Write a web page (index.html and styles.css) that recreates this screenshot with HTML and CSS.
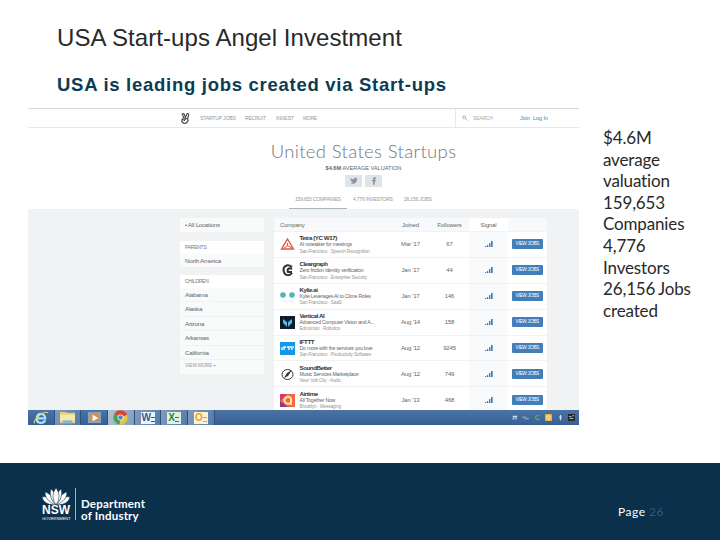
FILE: index.html
```html
<!DOCTYPE html>
<html lang="en">
<head>
  <meta charset="UTF-8">
  <meta name="viewport" content="width=device-width, initial-scale=1.0">
  <title>USA Start-ups Angel Investment</title>
  <link rel="stylesheet" href="styles.css">
</head>
<body>
  <main class="slide">
    <h1>USA Start-ups Angel Investment</h1>
    <h2>USA is leading jobs created via Start-ups</h2>

    <div class="content">
      <section class="browser">
        <nav class="nav">
          <svg class="hand" viewBox="0 0 16 20" fill="none" stroke="#444" stroke-width="2">
            <path d="M5 9L2 2l3-1 3 7 3-7 3 1-2 8M3 9l8 1 2 3-3 5-5 1-4-4 1-4 5 3M6 13l3-3"/>
          </svg>
          <span class="nav-jobs">STARTUP JOBS</span>
          <span class="nav-recruit">RECRUIT</span>
          <span class="nav-invest">INVEST</span>
          <span class="nav-more">MORE</span>
          <div class="search">
            <svg viewBox="0 0 8 8" fill="none" stroke="#999"><circle cx="3" cy="3" r="2"/><path d="M4.5 4.5L7.5 7.5"/></svg>
            <span>SEARCH</span>
          </div>
          <span class="join">Join</span>
          <span class="login">Log In</span>
        </nav>

        <header class="hero">
          <h3>United States Startups</h3>
          <p class="valuation"><b>$4.6M</b> AVERAGE VALUATION</p>
          <div class="social">
            <span><svg viewBox="0 0 24 24" fill="#8b959f"><path d="M23 5l-3 1 2-3-3 1c-3-3-8-1-7 3-4 0-7-2-10-5-1 3-1 5 2 7l-2-1c0 3 2 4 4 5H4c1 3 3 3 5 3-2 2-5 3-8 2 9 6 20 1 20-11z"/></svg></span>
            <span><svg viewBox="0 0 24 24" fill="#8b959f"><path d="M9 23V13H6V9h3V6c0-4 3-6 9-5v4c-3 0-4 0-4 2v2h4l-1 4h-3v10z"/></svg></span>
          </div>
          <div class="tabs">
            <span class="active">159,653 COMPANIES</span>
            <span class="tab-investors">4,776 INVESTORS</span>
            <span class="tab-jobs">26,156 JOBS</span>
          </div>
        </header>

        <div class="listing">
          <aside>
            <div class="box all">• All Locations</div>
            <div class="box">
              <h4>PARENTS</h4>
              <p>North America</p>
            </div>
            <div class="box children">
              <h4>CHILDREN</h4>
              <p>Alabama</p>
              <p>Alaska</p>
              <p>Arizona</p>
              <p>Arkansas</p>
              <p>California</p>
              <div class="view-more">VIEW MORE +</div>
            </div>
          </aside>

          <div class="table" id="table">
            <div class="row head">
              <span class="company-head">Company</span>
              <span>Joined</span>
              <span>Followers</span>
              <span class="signal">Signal</span>
              <span></span>
            </div>
          </div>
        </div>

        <div class="taskbar">
          <div class="app app-ie"><svg viewBox="0 0 20 16"><path d="M15 11c-2 4-9 4-9-2 0-7 9-6 9 0H7" fill="none" stroke="#a4e5fa" stroke-width="2.4"/><path d="M4 14C0 13 13 0 18 3" fill="none" stroke="#e4d275" stroke-width="1.2"/></svg></div>
          <div class="app open"><svg viewBox="0 0 20 16"><path d="M2 2h6l1 1h9v11H2z" fill="#e8cf7b"/><path d="M2 5h16v7H2z" fill="#f7e9a7"/><path d="M5 11h10v3H5z" fill="#83bcd4"/></svg></div>
          <div class="app"><svg viewBox="0 0 20 16"><path d="M3 2h14v12H3z" fill="#7ba9ca"/><path d="M5 3h10v10H5z" fill="#d28e62"/><path d="M8 5l6 3.5L8 12z" fill="#fff"/></svg></div>
          <div class="app open light"><svg viewBox="0 0 20 16"><circle cx="10" cy="8" r="7.6" fill="#e8c63d"/><path d="M10 8L3.6 4a7.6 7.6 0 0 1 13.5 1z" fill="#d94435"/><path d="M10 8L3.6 4a7.6 7.6 0 0 0 5.4 11.5z" fill="#4a9f55"/><circle cx="10" cy="8" r="3.2" fill="#f3f7fb"/><circle cx="10" cy="8" r="2.4" fill="#4d87c7"/></svg></div>
          <div class="app open"><div class="office word">W<i></i></div></div>
          <div class="app open"><div class="office excel">X<i></i></div></div>
          <div class="app open"><div class="office outlook">O<i></i></div></div>
          <div class="tray">
            <svg viewBox="0 0 8 8"><path d="M2 2h5v2H2zM1 5h6v1H1z" fill="#d4e1ef"/></svg>
            <svg viewBox="0 0 8 8"><path d="M0 3h5v1H0zM3 5h5v1H3z" fill="#b7d0c8"/></svg>
            <svg viewBox="0 0 8 8"><path d="M6 2C3 1 1 3 2 5s4 2 4 0" fill="none" stroke="#51a46d" stroke-width="1.6"/></svg>
            <svg viewBox="0 0 8 8"><path d="M0 0h8v8H0z" fill="#f1ac36"/><circle cx="4" cy="4" r="2" fill="none" stroke="#fff"/></svg>
            <svg viewBox="0 0 8 8"><path d="M4 1v6M2.5 3.5h3" stroke="#d5e2f4" stroke-width="1.4"/></svg>
            <svg viewBox="0 0 8 8"><path d="M0 0h8v8H0z" fill="#202b36"/><path d="M1 3h3M5 2h2M2 5h4" stroke="#c9ced1"/></svg>
          </div>
        </div>
      </section>

      <p class="stats">$4.6M<br>average<br>valuation<br>159,653<br>Companies<br>4,776<br>Investors<br>26,156 Jobs<br>created</p>
    </div>
  </main>

  <footer>
    <div class="nsw">
      <svg viewBox="0 0 28 17" fill="#fff" stroke="#0b304b" stroke-width=".6">
        <path d="M14 17C4 17 1 13 0 9c5-1 10 1 14 8zM14 17c10 0 13-4 14-8-5-1-10 1-14 8z"/>
        <path d="M14 17C6 14 3 9 3 4c6 2 9 6 11 13zM14 17c8-3 11-8 11-13-6 2-9 6-11 13z"/>
        <path d="M14 17C9 12 7 6 9 1c4 3 5 8 5 16zM14 17c5-5 7-11 5-16-4 3-5 8-5 16z"/>
        <path d="M14 17c-4-6-4-12 0-17 4 5 4 11 0 17z"/>
      </svg>
      <strong>NSW</strong>
      <small>GOVERNMENT</small>
    </div>
    <div class="department">Department<br>of Industry</div>
    <div class="page">Page <span>26</span></div>
  </footer>

  <script src="script.js"></script>
</body>
</html>
```
FILE: styles.css
```css
* {
  margin: 0;
  padding: 0;
  box-sizing: border-box;
}

body {
  width: 720px;
  height: 540px;
  overflow: hidden;
  background: #fff;
  font-family: "Liberation Sans", Arial, sans-serif;
}

.slide {
  height: 463px;
  padding: 24px 0 0 28px;
}

h1 {
  height: 28px;
  padding-left: 29px;
  font-size: 24px;
  line-height: 28px;
  font-weight: normal;
  letter-spacing: 0.07px;
  color: #292929;
  white-space: nowrap;
}

h2 {
  height: 24px;
  margin: 21px 0 11px;
  padding-left: 29px;
  font-size: 18.5px;
  line-height: 24px;
  letter-spacing: 0.72px;
  color: #0c3b54;
  white-space: nowrap;
}

.content {
  display: flex;
}

.browser {
  width: 551px;
  height: 317px;
  overflow: hidden;
  border-top: 1px solid #d5d7d9;
  color: #666;
  white-space: nowrap;
}

.nav {
  display: flex;
  align-items: center;
  height: 19px;
  padding-left: 153px;
  border-bottom: 1px solid #e7e8e9;
  font-size: 5.4px;
  color: #999;
}

.hand {
  width: 9px;
  height: 11px;
  margin-right: 10px;
}

.nav-jobs {
  width: 45px;
  font-size: 5.2px;
  letter-spacing: -0.25px;
}

.nav-recruit {
  width: 31px;
  font-size: 5px;
  letter-spacing: -0.2px;
}

.nav-invest {
  width: 27px;
  letter-spacing: -0.3px;
}

.nav-more {
  width: 152px;
  font-size: 5px;
  letter-spacing: -0.3px;
}

.search {
  display: flex;
  align-items: center;
  width: 65px;
  height: 18px;
  padding-left: 6px;
  border-left: 1px solid #e7e8e9;
  font-size: 5px;
  letter-spacing: -0.2px;
  color: #aaa;
}

.search svg {
  width: 6px;
  height: 6px;
  margin-right: 5px;
}

.join,
.login {
  color: #4779a9;
}

.join {
  width: 13px;
}

.hero {
  height: 81px;
  padding-top: 12px;
  text-align: center;
}

.hero h3 {
  height: 23px;
  padding-left: 120px;
  font-family: Lato, sans-serif;
  font-size: 18.5px;
  line-height: 22px;
  font-weight: 300;
  letter-spacing: 0.35px;
  color: #74767a;
}

.valuation {
  height: 10px;
  margin-top: 1px;
  padding-left: 120px;
  font-size: 5.6px;
  line-height: 9px;
}

.social {
  display: flex;
  gap: 3px;
  justify-content: center;
  margin-top: 1px;
  padding-left: 120px;
}

.social span {
  display: flex;
  align-items: center;
  justify-content: center;
  width: 17px;
  height: 12px;
  background: #dfe4e8;
  border-radius: 1px;
}

.social svg {
  width: 8px;
  height: 8px;
}

.tabs {
  display: flex;
  height: 22px;
  padding-left: 261px;
  font-size: 5px;
  line-height: 24px;
  letter-spacing: -0.2px;
  text-align: left;
  color: #999;
}

.tabs .active {
  width: 58px;
  padding-left: 6px;
  border-bottom: 1px solid #aab7b9;
}

.tab-investors {
  width: 52px;
  padding-left: 6px;
}

.tab-jobs {
  padding-left: 5px;
}

.listing {
  display: flex;
  gap: 10px;
  height: 201px;
  padding: 9px 32px 0 152px;
  overflow: hidden;
  background: #f0f2f4;
}

aside {
  width: 84px;
  font-size: 6.2px;
  letter-spacing: -0.25px;
}

.box {
  height: 26px;
  margin-bottom: 8.5px;
  background: #f9fafa;
}

.box.all {
  height: 14px;
  padding-left: 5px;
  line-height: 14px;
}

.box.children {
  height: 98.5px;
}

.box h4 {
  height: 13px;
  padding-left: 5px;
  background: #fff;
  font-size: 5px;
  line-height: 13px;
  font-weight: normal;
  color: #777;
}

.box p {
  height: 14.4px;
  padding-left: 5px;
  border-bottom: 1px solid #f0f2f3;
  line-height: 14px;
}

.view-more {
  height: 13px;
  padding-left: 5px;
  font-size: 4.8px;
  line-height: 12px;
  letter-spacing: -0.1px;
  color: #999;
}

.table {
  width: 273px;
  background: #fff;
}

.row {
  display: grid;
  grid-template-columns: 117px 39px 39px 39px 39px;
  height: 25.9px;
  border-bottom: 1px solid #f0f2f3;
  align-items: center;
  font-size: 6px;
  letter-spacing: -0.15px;
  text-align: center;
}

.head {
  height: 14px;
  background: #f8f9fa;
}

.head .company-head {
  padding-left: 6px;
  text-align: left;
}

.signal {
  display: flex;
  align-items: center;
  justify-content: center;
  height: 100%;
  background: #f8fafb;
}

.head .signal {
  background: #fff;
}

.signal svg {
  width: 8px;
  height: 6px;
}

.company {
  display: flex;
  text-align: left;
}

.logo {
  width: 15px;
  height: 13px;
  margin: 4px 4.5px 0 6px;
}

.details b {
  display: block;
  height: 7px;
  font-size: 6.2px;
  line-height: 7px;
  letter-spacing: -0.45px;
  color: #333;
}

.details p {
  height: 6.5px;
  font-size: 5.2px;
  line-height: 6.5px;
  letter-spacing: -0.22px;
}

.details small {
  display: block;
  height: 7px;
  font-size: 4.8px;
  line-height: 7px;
  letter-spacing: -0.23px;
  color: #999;
}

.button {
  width: 30.5px;
  height: 10px;
  margin-left: 4px;
  border-radius: 1px;
  background: #437eb9;
  color: #fff;
  font-size: 4.8px;
  line-height: 10px;
  letter-spacing: -0.3px;
}

.taskbar {
  display: flex;
  height: 15px;
  background: linear-gradient(#4b74a5, #365f94);
}

.app {
  display: flex;
  align-items: center;
  justify-content: center;
  width: 26.7px;
  height: 15px;
  border-right: 1px solid #2d517d;
}

.app > svg {
  width: 19px;
  height: 15px;
}

.open {
  background: linear-gradient(110deg, #809cbd, #547ba9);
}

.light {
  background: linear-gradient(110deg, #b5c4d6, #829cba);
}

.office {
  display: flex;
  align-items: center;
  width: 14px;
  height: 12px;
  padding-left: 1px;
  overflow: hidden;
  background: #edf4fb;
  font-size: 10px;
  line-height: 12px;
  font-weight: bold;
}

.office i {
  flex: none;
  width: 4px;
  height: 5px;
  margin-top: 4px;
  border-top: 1px solid currentColor;
  border-bottom: 1px solid currentColor;
}

.word {
  color: #285ba0;
}

.excel {
  color: #308144;
  background: #e2f0df;
}

.outlook {
  color: #dfa02d;
  background: #fff1cf;
}

.tray {
  display: flex;
  align-items: center;
  gap: 4.5px;
  margin-left: auto;
  padding-right: 4px;
}

.tray svg {
  width: 7px;
  height: 7px;
}

.stats {
  padding: 19px 0 0 24px;
  font-family: Lato, sans-serif;
  font-size: 17px;
  line-height: 21.6px;
  letter-spacing: -0.15px;
  word-spacing: -1px;
  color: #292929;
  white-space: nowrap;
}

footer {
  display: flex;
  height: 77px;
  background: #0b304b;
  color: #fff;
}

.nsw {
  width: 34px;
  height: 32px;
  margin: 25px 0 0 42px;
  border-right: 1px solid #a3b3bf;
}

.nsw svg {
  display: block;
  width: 28px;
  height: 17px;
}

.nsw strong {
  display: block;
  height: 10px;
  font-size: 12px;
  line-height: 11px;
}

.nsw small {
  display: block;
  margin-top: 1px;
  font-size: 4px;
  line-height: 5px;
}

.department {
  margin: 35px 0 0 5px;
  font-family: Lato, sans-serif;
  font-size: 11.5px;
  line-height: 12px;
  font-weight: bold;
  letter-spacing: 0.2px;
}

.page {
  margin: 41px 56px 0 auto;
  font-family: Lato, sans-serif;
  font-size: 12px;
  line-height: 16px;
  letter-spacing: 0.5px;
}

.page span {
  color: #285c82;
}
```
FILE: script.js
```js
const companies = [
  ["Tetra (YC W17)", "AI notetaker for meetings", "San Francisco · Speech Recognition", "Mar '17", "67",
    '<path d="M7.5 1l6 10h-12z" fill="none" stroke="#dd5745" stroke-width="1.4"/><path d="M7.5 5v3L4 10m4-2l4 2" stroke="#dd5745" fill="none"/>'],
  ["Cleargraph", "Zero friction identity verification", "San Francisco · Enterprise Security", "Jan '17", "44",
    '<path d="M12 3C7-1 2 3 4 8c1 4 6 4 8 1M12 5C8 3 7 6 8 8h4" fill="none" stroke="#333" stroke-width="2"/>'],
  ["Kylie.ai", "Kylie Leverages AI to Clone Roles", "San Francisco · SaaS", "Jan '17", "146",
    '<circle cx="3" cy="5" r="2.8" fill="#4dbab1"/><circle cx="12" cy="5" r="2.8" fill="#4dbab1"/><path d="M1 11h13" stroke="#e4eeee"/>'],
  ["Vertical AI", "Advanced Computer Vision and A...", "Edmonton · Robotics", "Aug '14", "158",
    '<path d="M0 0h15v13H0z" fill="#101c29"/><path d="M3 3v4l4 4V6zM12 3v4l-4 4V6z" fill="#55b7dc"/>'],
  ["IFTTT", "Do more with the services you love", "San Francisco · Productivity Software", "Aug '12", "9245",
    '<path d="M0 0h15v13H0z" fill="#1598e3"/><path d="M2 5v3M4 8V5h2M7 5h2v3m1-3h2v3m1-3h1" fill="none" stroke="#fff" stroke-width="1.3"/>'],
  ["SoundBetter", "Music Services Marketplace", "New York City · Audio", "Aug '12", "749",
    '<ellipse cx="7.5" cy="6.5" rx="5.5" ry="5" fill="none" stroke="#333"/><path d="M4 10l3-5 5-3-4 6z" fill="#333"/>'],
  ["Airtime", "All Together Now", "Brooklyn · Messaging", "Jan '13", "468",
    '<path d="M0 0h15v13H0z" fill="#ed6940"/><path d="M0 13V7l8 6z" fill="#8e3799"/><path d="M0 0h7L0 7z" fill="#da3670"/><path d="M11 4C7 1 3 5 5 8s6 2 6-1V4v7" fill="none" stroke="#ffe4aa" stroke-width="2"/>']
];

const table = document.getElementById("table");
companies.forEach(([name, description, place, joined, followers, logo]) => {
  const row = document.createElement("div");
  row.className = "row";
  row.innerHTML = `
    <div class="company">
      <svg class="logo" viewBox="0 0 15 13">${logo}</svg>
      <div class="details"><b>${name}</b><p>${description}</p><small>${place}</small></div>
    </div>
    <span>${joined}</span>
    <span>${followers}</span>
    <span class="signal"><svg viewBox="0 0 8 6" fill="#447bb9"><path d="M0 5h1.4v1H0zM2 4h1.2v2H2zM4 2h1.4v4H4zM6 0h1.7v6H6z"/></svg></span>
    <span class="button">VIEW JOBS</span>`;
  table.appendChild(row);
});
```
